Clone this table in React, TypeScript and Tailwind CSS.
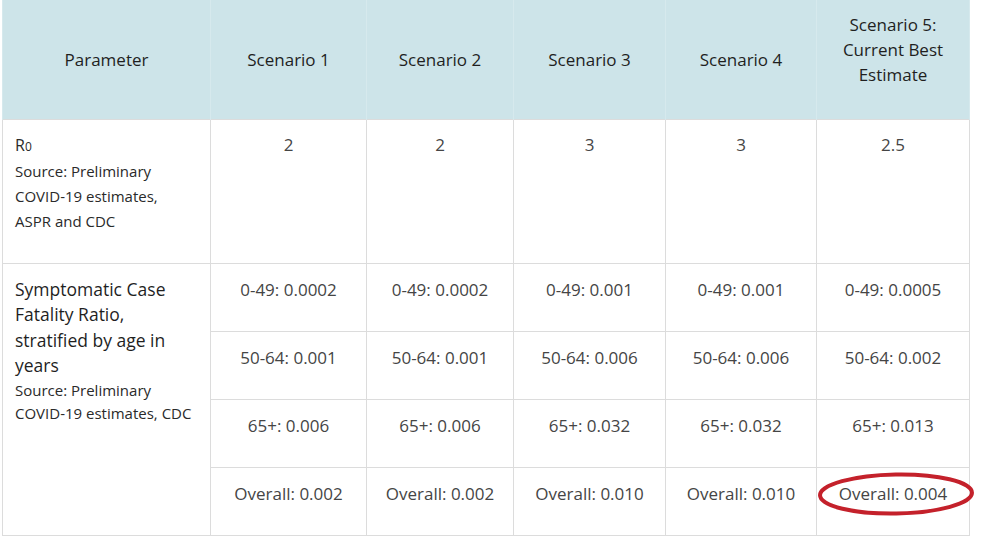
import React from "react";

const scen = [
  { r0: "2", a: "0.0002", b: "0.001", c: "0.006", o: "0.002" },
  { r0: "2", a: "0.0002", b: "0.001", c: "0.006", o: "0.002" },
  { r0: "3", a: "0.001", b: "0.006", c: "0.032", o: "0.010" },
  { r0: "3", a: "0.001", b: "0.006", c: "0.032", o: "0.010" },
  { r0: "2.5", a: "0.0005", b: "0.002", c: "0.013", o: "0.004" },
];

const cell = "border border-[#dcdcdc] text-center align-top text-[17px] leading-[24px] text-[#454545]";

export default function App() {
  return (
    <div className="w-[981px] h-[537px] bg-white overflow-hidden" style={{ fontFamily: '"Open Sans", "Liberation Sans", sans-serif' }}>
      <table className="ml-[2px] table-fixed border-collapse w-[967px]">
        <colgroup>
          <col className="w-[208px]" />
          <col className="w-[156px]" />
          <col className="w-[147px]" />
          <col className="w-[152px]" />
          <col className="w-[151px]" />
          <col className="w-[153px]" />
        </colgroup>
        <thead>
          <tr className="h-[119px] bg-[#cde4e9]">
            {["Parameter", "Scenario 1", "Scenario 2", "Scenario 3", "Scenario 4"].map((h) => (
              <th key={h} className="border-x border-[#d6e9ed] text-[17px] leading-[25px] font-normal text-[#1f1f1f] align-middle text-center">
                {h}
              </th>
            ))}
            <th className="border-x border-[#d6e9ed] text-[17px] leading-[25px] font-normal text-[#1f1f1f] align-top pt-[12px] text-center">
              Scenario 5:
              <br />
              Current Best
              <br />
              Estimate
            </th>
          </tr>
        </thead>
        <tbody>
          <tr className="h-[144px]">
            <td className="border border-[#dcdcdc] align-top text-left pl-[12px] pt-[13px] text-[15px] leading-[25px] text-[#2a2a2a]">
              <span className="text-[16px]">R</span>
              <span className="text-[12px]">0</span>
              <br />
              Source: Preliminary
              <br />
              COVID-19 estimates,
              <br />
              ASPR and CDC
            </td>
            {scen.map((s, i) => (
              <td key={i} className={`${cell} pt-[13px]`}>
                {s.r0}
              </td>
            ))}
          </tr>
          <tr className="h-[68px]">
            <td rowSpan={4} className="border border-[#dcdcdc] align-top text-left pl-[12px] pt-[13px] text-[#1f1f1f]">
              <div className="text-[17.5px] leading-[25.5px]">
                Symptomatic Case
                <br />
                Fatality Ratio,
                <br />
                stratified by age in
                <br />
                years
              </div>
              <div className="text-[15px] leading-[23px] text-[#2a2a2a]">
                Source: Preliminary
                <br />
                COVID-19 estimates, CDC
              </div>
            </td>
            {scen.map((s, i) => (
              <td key={i} className={`${cell} pt-[14px]`}>
                0-49: {s.a}
              </td>
            ))}
          </tr>
          <tr className="h-[68px]">
            {scen.map((s, i) => (
              <td key={i} className={`${cell} pt-[14px]`}>
                50-64: {s.b}
              </td>
            ))}
          </tr>
          <tr className="h-[68px]">
            {scen.map((s, i) => (
              <td key={i} className={`${cell} pt-[14px]`}>
                65+: {s.c}
              </td>
            ))}
          </tr>
          <tr className="h-[68px]">
            {scen.map((s, i) => (
              <td key={i} className={`${cell} pt-[14px] relative`}>
                Overall: {s.o}
                {i === 4 && (
                  <svg className="absolute left-0 top-[3px] overflow-visible" width="158" height="46" viewBox="0 0 158 46">
                    <ellipse cx="79" cy="23" rx="76" ry="19.5" fill="none" stroke="#c4212b" strokeWidth="4" transform="rotate(-1 79 23)" />
                  </svg>
                )}
              </td>
            ))}
          </tr>
        </tbody>
      </table>
    </div>
  );
}
